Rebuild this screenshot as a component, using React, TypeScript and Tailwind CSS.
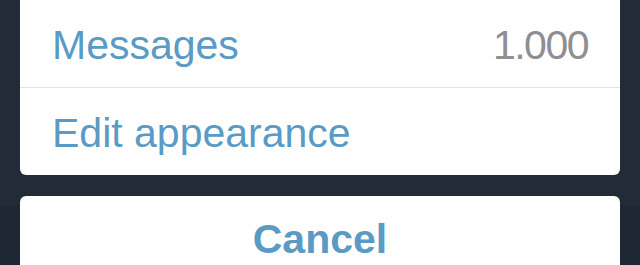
export default function App() {
  const font = { fontFamily: '"Liberation Sans", Arial, sans-serif' }
  return (
    <div
      className="w-[640px] h-[265px] overflow-hidden bg-[linear-gradient(to_bottom,#232b38_0px,#232b38_205px,#1f2734_205px,#1f2734_265px)] px-5"
      style={font}
    >
      <div className="bg-white rounded-b-[6px] overflow-hidden">
        <div className="h-[87px] pt-[5px] flex items-center justify-between pl-8 pr-8 text-[41px]">
          <span className="text-[#5a9bc5]">Messages</span>
          <span className="text-[#8e8e93] tracking-[-1.5px]">1.000</span>
        </div>
        <div className="h-px bg-[#e3e3e5]" />
        <div className="h-[87px] pt-[5px] flex items-center pl-8 text-[41px] text-[#5a9bc5]">
          Edit appearance
        </div>
      </div>
      <div className="mt-[21px] bg-white rounded-[6px] h-[88px] flex items-center justify-center text-[41px] font-bold text-[#5a9bc5]">
        Cancel
      </div>
    </div>
  )
}
